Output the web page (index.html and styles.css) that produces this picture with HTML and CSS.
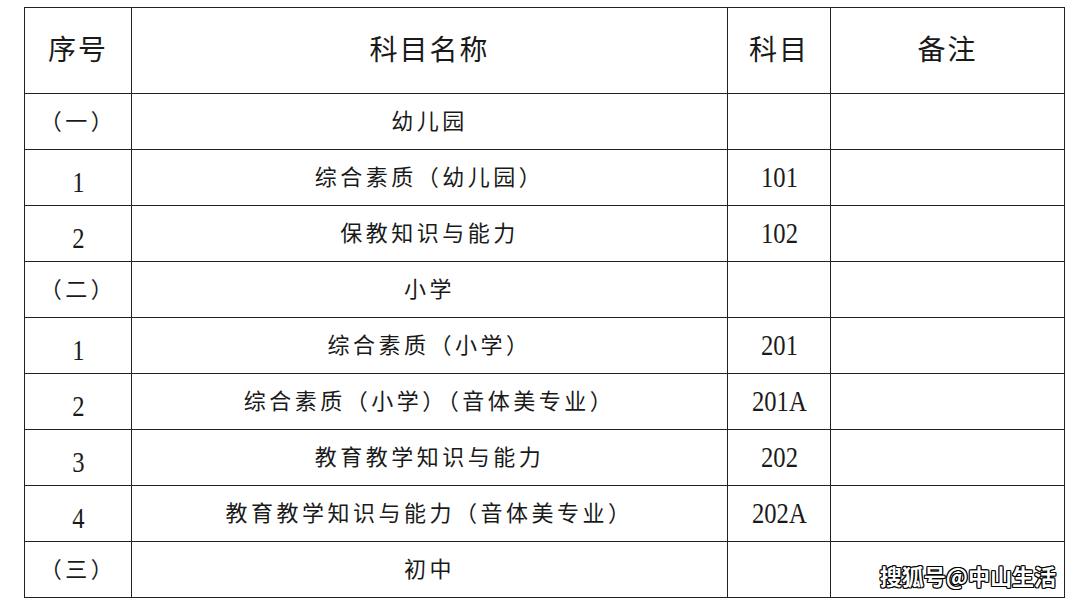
FILE: index.html
```html
<!DOCTYPE html>
<html lang="zh-CN">
<head>
<meta charset="utf-8">
<link rel="stylesheet" href="styles.css">
</head>
<body>
<div class="page">
  <table class="grid">
    <colgroup>
      <col class="c1"><col class="c2"><col class="c3"><col class="c4">
    </colgroup>
    <thead>
      <tr class="head">
        <th><span>序号</span></th><th><span>科目名称</span></th><th><span>科目</span></th><th><span>备注</span></th>
      </tr>
    </thead>
    <tbody>
      <tr><td class="cn"><span>（一）</span></td><td class="cn"><span>幼儿园</span></td><td></td><td></td></tr>
      <tr><td class="num idx"><span>1</span></td><td class="cn"><span>综合素质（幼儿园）</span></td><td class="num"><span>101</span></td><td></td></tr>
      <tr><td class="num idx"><span>2</span></td><td class="cn"><span>保教知识与能力</span></td><td class="num"><span>102</span></td><td></td></tr>
      <tr><td class="cn"><span>（二）</span></td><td class="cn"><span>小学</span></td><td></td><td></td></tr>
      <tr><td class="num idx"><span>1</span></td><td class="cn"><span>综合素质（小学）</span></td><td class="num"><span>201</span></td><td></td></tr>
      <tr><td class="num idx"><span>2</span></td><td class="cn"><span>综合素质（小学）（音体美专业）</span></td><td class="num"><span>201A</span></td><td></td></tr>
      <tr><td class="num idx"><span>3</span></td><td class="cn"><span>教育教学知识与能力</span></td><td class="num"><span>202</span></td><td></td></tr>
      <tr><td class="num idx"><span>4</span></td><td class="cn"><span>教育教学知识与能力（音体美专业）</span></td><td class="num"><span>202A</span></td><td></td></tr>
      <tr><td class="cn"><span>（三）</span></td><td class="cn"><span>初中</span></td><td></td><td></td></tr>
    </tbody>
  </table>
  <div class="mark">搜狐号@中山生活</div>
</div>
</body>
</html>
```
FILE: styles.css
```css
html, body {
  margin: 0;
  padding: 0;
  background: #fff;
}
.page {
  position: relative;
  width: 1080px;
  height: 601px;
  padding: 7px 0 0 24px;
  box-sizing: border-box;
}
.grid {
  border-collapse: collapse;
  table-layout: fixed;
  width: 1040px;
}
.c1 { width: 107px; }
.c2 { width: 596px; }
.c3 { width: 103px; }
.c4 { width: 234px; }
.grid th, .grid td {
  border: 1.5px solid #222;
  padding: 0;
  text-align: center;
  vertical-align: middle;
  color: #1a1a1a;
}
.head th {
  height: 85px;
  font-family: "Noto Sans CJK SC", sans-serif;
  font-weight: 400;
  font-size: 28px;
  letter-spacing: 2px;
}
.head th span {
  display: inline-block;
  position: relative;
  top: -3px;
}
.grid td {
  height: 55px;
}
.cn {
  font-family: "Noto Sans CJK SC", sans-serif;
  font-size: 22px;
  letter-spacing: 3.5px;
  color: #2a2a2a;
}
.cn span {
  display: inline-block;
  position: relative;
  top: -3px;
}
.num {
  font-family: "Liberation Serif", serif;
  font-size: 30px;
}
.num span {
  display: inline-block;
  transform: scaleX(0.82);
  position: relative;
  top: -1px;
}
.num.idx span {
  top: 4px;
}
.mark {
  position: absolute;
  right: 24px;
  bottom: 10px;
  font-family: "Noto Sans CJK SC", sans-serif;
  font-weight: 700;
  font-size: 22px;
  color: #fff;
  text-shadow: -1px -1px 0 #000, 1px -1px 0 #000, -1px 1px 0 #000, 1px 1px 0 #000, 0 1px 0 #000, 0 -1px 0 #000, 1px 0 0 #000, -1px 0 0 #000;
}
```
